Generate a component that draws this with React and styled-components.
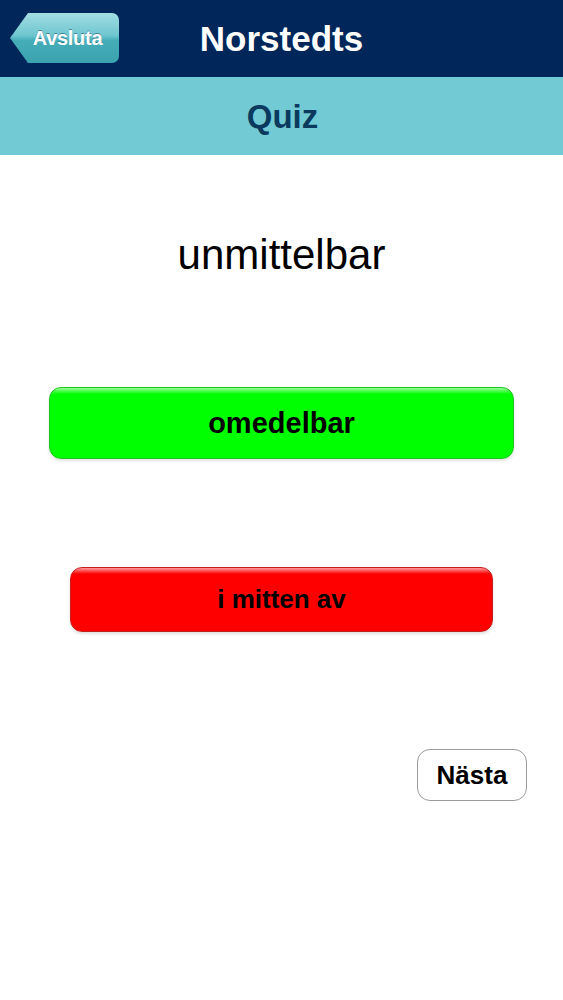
import React from "react";
import styled, { createGlobalStyle } from "styled-components";

const GlobalStyle = createGlobalStyle`
  html, body {
    margin: 0;
    padding: 0;
    background: #ffffff;
    font-family: "Liberation Sans", Arial, Helvetica, sans-serif;
  }
`;

// <main>
const Screen = styled.main`
  width: 563px;
  min-height: 1000px;
  display: flex;
  flex-direction: column;
  background: #ffffff;
`;

// <header>
const NavBar = styled.header`
  position: relative;
  height: 77px;
  background: #00265a;
  display: flex;
  align-items: center;
  justify-content: center;
`;

const BackButton = styled.button`
  position: absolute;
  left: 10px;
  top: 13px;
  width: 109px;
  height: 50px;
  border: none;
  border-radius: 7px;
  padding: 0 0 0 6px;
  clip-path: polygon(0 50%, 18px 0, 100% 0, 100% 100%, 18px 100%);
  background: linear-gradient(#a3dde3 0%, #6ec6cf 45%, #45adb8 55%, #3aa3af 100%);
  color: #ffffff;
  font-family: inherit;
  font-size: 20px;
  font-weight: bold;
  letter-spacing: -0.3px;
  text-shadow: 0 -1px 0 rgba(0, 50, 80, 0.45);
`;

const Title = styled.h1`
  margin: 0;
  color: #ffffff;
  font-size: 35px;
  font-weight: bold;
  line-height: 1;
`;

// <div>
const SubBar = styled.div`
  height: 78px;
  background: #72cbd4;
  display: flex;
  align-items: center;
  justify-content: center;
`;

const SubTitle = styled.h2`
  margin: 0 0 0 2px;
  color: #0b3a5f;
  font-size: 33px;
  font-weight: bold;
  line-height: 1;
`;

// <section>
const Content = styled.section`
  display: flex;
  flex-direction: column;
  align-items: center;
`;

const Word = styled.p`
  margin: 75px 0 0;
  height: 50px;
  line-height: 50px;
  font-size: 42px;
  color: #000000;
`;

const palettes = {
  green: { base: "#00ff00", light: "#9bff9b", edge: "#1fc41f" },
  red: { base: "#ff0000", light: "#ff9b9b", edge: "#c41f1f" },
};

const AnswerButton = styled.button`
  margin-top: ${(p) => p.$gap}px;
  width: ${(p) => p.$width}px;
  height: ${(p) => p.$height}px;
  border: 1px solid ${(p) => palettes[p.$tone].edge};
  border-radius: 12px;
  background: linear-gradient(
    ${(p) => palettes[p.$tone].light} 0px,
    ${(p) => palettes[p.$tone].base} 6px,
    ${(p) => palettes[p.$tone].base} 100%
  );
  box-shadow: 0 2px 3px rgba(0, 0, 0, 0.12);
  color: #000000;
  font-family: inherit;
  font-size: ${(p) => p.$size}px;
  font-weight: bold;
`;

const Footer = styled.div`
  align-self: stretch;
  display: flex;
  justify-content: flex-end;
  padding: 117px 36px 0 0;
`;

const NextButton = styled.button`
  width: 110px;
  height: 52px;
  border: 1.5px solid #9a9a9a;
  border-radius: 13px;
  background: #ffffff;
  color: #000000;
  font-family: inherit;
  font-size: 26px;
  font-weight: bold;
`;

export default function App() {
  return (
    <Screen>
      <GlobalStyle />
      <NavBar>
        <BackButton>Avsluta</BackButton>
        <Title>Norstedts</Title>
      </NavBar>
      <SubBar>
        <SubTitle>Quiz</SubTitle>
      </SubBar>
      <Content>
        <Word>unmittelbar</Word>
        <AnswerButton $tone="green" $gap={107} $width={465} $height={72} $size={29}>
          omedelbar
        </AnswerButton>
        <AnswerButton $tone="red" $gap={108} $width={423} $height={65} $size={26}>
          i mitten av
        </AnswerButton>
        <Footer>
          <NextButton>Nästa</NextButton>
        </Footer>
      </Content>
    </Screen>
  );
}
